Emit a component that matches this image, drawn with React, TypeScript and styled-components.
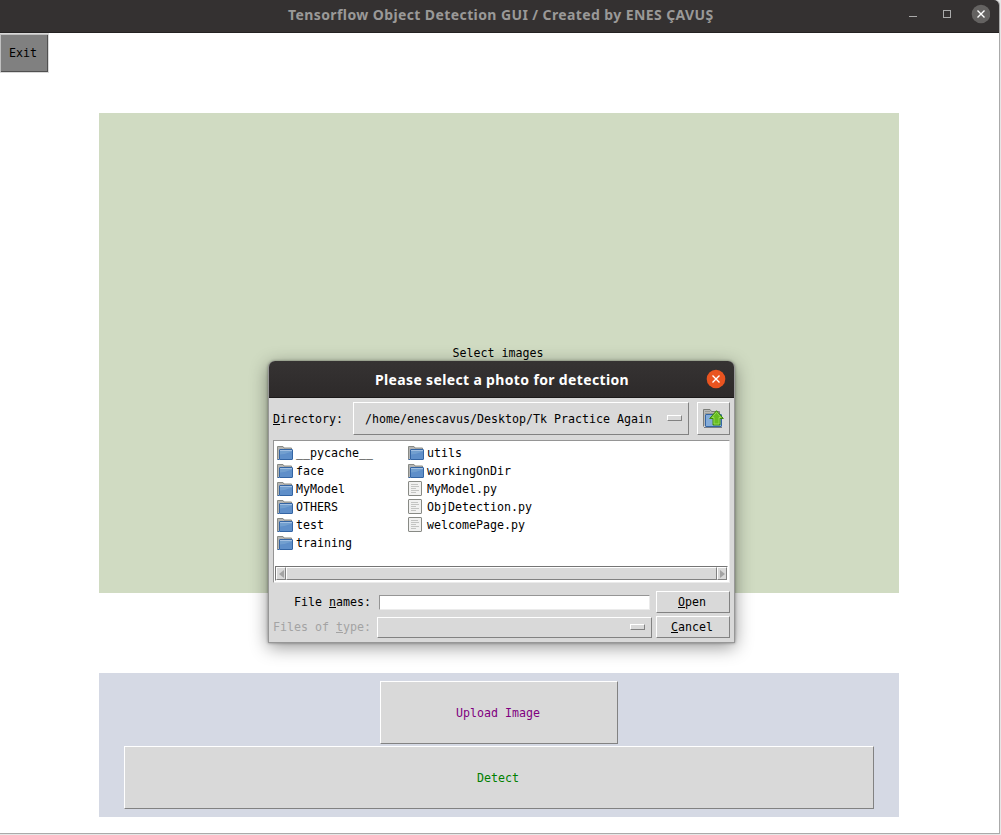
import React from "react";
import styled, { createGlobalStyle } from "styled-components";

const Global = createGlobalStyle`
  * { box-sizing: border-box; }
  body { margin: 0; background: #e3e3e3; overflow: hidden; }
`;

const Screen = styled.div`
  position: relative;
  width: 1001px;
  height: 835px;
  background: #e6e6e6;
  font-family: "DejaVu Sans Mono", monospace;
  font-size: 11.63px;
  line-height: 14px;
  color: #000;
  white-space: pre;
`;

const MainWindow = styled.div`
  display: flex;
  flex-direction: column;
  width: 1000px;
  height: 834px;
  background: #fff;
  border-right: 1px solid #aaa;
  border-bottom: 1px solid #aaa;
  border-top-right-radius: 5px;
`;

const TitleBar = styled.header`
  display: flex;
  align-items: center;
  height: 33px;
  flex: none;
  padding: 0 9px 4px 288px;
  background: #343131;
  border-bottom: 1px solid #242222;
  border-top-right-radius: 5px;
`;

const Title = styled.h1<{ $color: string; $spacing: number }>`
  margin: 0;
  padding-top: 2px;
  font: bold 14px/20px "Noto Sans", sans-serif;
  letter-spacing: ${(p) => p.$spacing}px;
  color: ${(p) => p.$color};
`;

const WindowControls = styled.div`
  display: flex;
  align-items: center;
  margin-left: auto;
  height: 28px;
`;

const ExitButton = styled.button`
  align-self: flex-start;
  width: 49px;
  height: 40px;
  border: 1px solid #d9d9d9;
  border-left: 0;
  background: #808080;
  font: inherit;
  text-align: left;
  box-shadow: inset 1px 1px #c0c0c0, inset -1px -1px #505050;
  padding: 0 0 0 9px;
`;

const Preview = styled.section`
  display: flex;
  align-items: center;
  justify-content: center;
  width: 800px;
  height: 480px;
  margin: 40px 0 0 99px;
  padding-right: 2px;
  background: #d0dbc2;
`;

const Actions = styled.section`
  display: flex;
  flex-direction: column;
  align-items: center;
  gap: 2px;
  width: 800px;
  height: 144px;
  margin: 80px 0 0 99px;
  padding-top: 8px;
  background: #d5d9e4;
`;

const Raised = styled.button<{ $w: number; $h: number; $color?: string }>`
  display: flex;
  align-items: center;
  justify-content: center;
  flex: none;
  width: ${(p) => p.$w}px;
  height: ${(p) => p.$h}px;
  padding: 0 2px 0 0;
  border: 1px solid;
  border-color: #fff #828282 #828282 #fff;
  background: #d9d9d9;
  color: ${(p) => p.$color ?? "#000"};
  font: inherit;
`;

const Dialog = styled.div`
  position: absolute;
  left: 268px;
  top: 361px;
  width: 467px;
  height: 282px;
  display: flex;
  flex-direction: column;
  background: #d9d9d9;
  border: 1px solid #979797;
  border-top: 0;
  border-radius: 7px 7px 0 0;
  box-shadow: 0 4px 18px rgba(0, 0, 0, 0.42), 0 0 3px rgba(0, 0, 0, 0.4);
`;

const DialogBar = styled.header`
  display: flex;
  align-items: center;
  justify-content: space-between;
  flex: none;
  height: 37px;
  padding: 0 8px 0 106px;
  background: linear-gradient(#363333, #2d2a2a);
  border-bottom: 1px solid #1b1919;
  border-radius: 6px 6px 0 0;
`;

const DirectoryRow = styled.div`
  display: flex;
  align-items: center;
  height: 33px;
  margin: 4px 4px 0;
`;

const Label = styled.label<{ $w: number; $right?: boolean; $dim?: boolean }>`
  width: ${(p) => p.$w}px;
  flex: none;
  text-align: ${(p) => (p.$right ? "right" : "left")};
  color: ${(p) => (p.$dim ? "#a3a3a3" : "#000")};
`;

const Key = styled.span`
  text-decoration: underline;
  text-underline-offset: 1px;
  text-decoration-thickness: 1px;
  text-decoration-skip-ink: none;
`;

const Dropdown = styled(Raised)`
  justify-content: space-between;
  padding: 0 6px 0 11px;
`;

const Indicator = styled.span`
  width: 15px;
  height: 6px;
  margin: 0 0 1px auto;
  border: 1px solid;
  border-color: #fff #828282 #828282 #fff;
`;

const UpButton = styled(Raised)`
  margin-left: 8px;
  padding: 0;
`;

const FileBox = styled.div`
  display: flex;
  flex-direction: column;
  width: 457px;
  height: 143px;
  margin: 5px 0 0 4px;
  padding: 3px 1px 1px;
  background: #fff;
  border: 1px solid;
  border-color: #959595 #ebebeb #ebebeb #959595;
`;

const Columns = styled.div`
  display: flex;
  flex: 1;
  padding-left: 2px;
`;

const Column = styled.ul<{ $w: number }>`
  width: ${(p) => p.$w}px;
  margin: 0;
  padding: 0;
  list-style: none;
`;

const Item = styled.li`
  display: flex;
  align-items: center;
  height: 18px;
  gap: 3px;

  svg { flex: none; }
`;

const ScrollBar = styled.div`
  display: flex;
  width: 453px;
  height: 15px;
  background: #fff;
  border: 1px solid;
  border-color: #757575 #fff #fff #757575;
`;

const ScrollPart = styled.div<{ $w: number }>`
  display: flex;
  align-items: center;
  justify-content: center;
  width: ${(p) => p.$w}px;
  height: 13px;
  background: #d9d9d9;
  border: 1px solid;
  border-color: #fff #828282 #828282 #fff;
`;

const Form = styled.div`
  display: flex;
  flex-direction: column;
  gap: 3px;
  margin: 8px 4px 0;
`;

const FormRow = styled.div`
  display: flex;
  align-items: center;
  height: 22px;
`;

const Entry = styled.input`
  width: 271px;
  height: 15px;
  margin: 0 6px 0 8px;
  padding: 0;
  background: #fff;
  border: 1px solid;
  border-color: #959595 #ebebeb #ebebeb #959595;
`;

const TypeDropdown = styled(Dropdown)`
  margin: 0 4px 0 6px;
`;

const Folder = () => (
  <svg width="16" height="16" viewBox="0 0 16 16">
    <path d="M.5 14.500V1.500h5.500l1 1.500h7.500v3" fill="#b5b5b3" stroke="#888a85" />
    <path d="M.5 14.500h2" stroke="#3465a4" />
    <rect x="2.500" y="4.500" width="13" height="10" rx=".5" fill="#729fcf" stroke="#3465a4" />
    <path d="M3 9.500q6-.5 12-3V14H3z" fill="#5f8fc9" />
    <path d="M3 5.500h12" stroke="#a3c0e2" />
  </svg>
);

const FileIcon = () => (
  <svg width="16" height="16" viewBox="0 0 16 16">
    <rect x=".5" y=".5" width="13" height="14" rx=".5" fill="#f1f1f0" stroke="#888a85" />
    <path d="M3 3.500h7M3 5.500h8M3 7.500h5M3 9.500h8M3 11.500h5" stroke="#c3c4c2" />
  </svg>
);

const UpFolder = () => (
  <svg width="21" height="21" viewBox="0 0 21 21">
    <path d="M.5 18.500V1.500h6.500l1.500 2h8v4" fill="#b9b9b7" stroke="#7b7d79" />
    <path d="M2 3.500h5M2 5.500h13" stroke="#989a96" />
    <path d="M1 19.500h18" stroke="#777d86" />
    <rect x="2.500" y="6.500" width="16" height="12" rx=".5" fill="#84acd9" stroke="#3465a4" />
    <path d="M13.500 2.700l6.800 7.800h-3.300v6.500h-7v-6.500H6.700z" fill="#66bd20" stroke="#3e8a08" />
    <path d="M13.500 4.300l4.500 5.200h-2v6.500h-5v-6.500H9z" fill="none" stroke="#a0e05f" strokeWidth=".8" />
  </svg>
);

const left = ["__pycache__", "face", "MyModel", "OTHERS", "test", "training"];
const right = ["utils", "workingOnDir", "MyModel.py", "ObjDetection.py", "welcomePage.py"];

const List = ({ names, width }: { names: string[]; width: number }) => (
  <Column $w={width}>
    {names.map((name) => (
      <Item key={name}>
        {name.endsWith(".py") ? <FileIcon /> : <Folder />}
        {name}
      </Item>
    ))}
  </Column>
);

export default function App() {
  return (
    <Screen>
      <Global />
      <MainWindow>
        <TitleBar>
          <Title $color="#9a9998" $spacing={0.4}>Tensorflow Object Detection GUI / Created by ENES ÇAVUŞ</Title>
          <WindowControls>
            <svg width="82" height="28" viewBox="0 0 82 28">
              <path d="M1 16.500h8" stroke="#aaa" />
              <rect x="35.500" y="10.500" width="7" height="7" fill="none" stroke="#aaa" />
              <circle cx="73" cy="14" r="9.300" fill="#646261" />
              <path d="M69.500 10.500l7 7M76.500 10.500l-7 7" stroke="#fff" strokeWidth="1.400" />
            </svg>
          </WindowControls>
        </TitleBar>
        <ExitButton>Exit</ExitButton>
        <Preview>Select images</Preview>
        <Actions>
          <Raised $w={238} $h={63} $color="#800080">Upload Image</Raised>
          <Raised $w={750} $h={63} $color="#008000">Detect</Raised>
        </Actions>
      </MainWindow>

      <Dialog>
        <DialogBar>
          <Title as="h2" $color="#fff" $spacing={0.35}>Please select a photo for detection</Title>
          <svg width="20" height="20" viewBox="0 0 20 20">
            <circle cx="10" cy="10" r="9.300" fill="#e95420" />
            <path d="M6.500 6.500l7 7M13.500 6.500l-7 7" stroke="#fff" strokeWidth="1.400" />
          </svg>
        </DialogBar>
        <DirectoryRow>
          <Label $w={80}><Key>D</Key>irectory:</Label>
          <Dropdown $w={336} $h={33}>
            /home/enescavus/Desktop/Tk Practice Again
            <Indicator />
          </Dropdown>
          <UpButton $w={33} $h={33}><UpFolder /></UpButton>
        </DirectoryRow>
        <FileBox>
          <Columns>
            <List names={left} width={131} />
            <List names={right} width={200} />
          </Columns>
          <ScrollBar>
            <ScrollPart $w={10}>
              <svg width="5" height="8" viewBox="0 0 5 8"><path d="M5 0v8L0 4z" fill="#a3a3a3" /></svg>
            </ScrollPart>
            <ScrollPart $w={431} />
            <ScrollPart $w={10}>
              <svg width="5" height="8" viewBox="0 0 5 8"><path d="M0 0v8l5-4z" fill="#a3a3a3" /></svg>
            </ScrollPart>
          </ScrollBar>
        </FileBox>
        <Form>
          <FormRow>
            <Label $w={98} $right>File <Key>n</Key>ames:</Label>
            <Entry />
            <Raised $w={74} $h={22}><span><Key>O</Key>pen</span></Raised>
          </FormRow>
          <FormRow>
            <Label $w={98} $right $dim>Files of <Key>t</Key>ype:</Label>
            <TypeDropdown $w={275} $h={21}><Indicator /></TypeDropdown>
            <Raised $w={74} $h={22}><span><Key>C</Key>ancel</span></Raised>
          </FormRow>
        </Form>
      </Dialog>
    </Screen>
  );
}
